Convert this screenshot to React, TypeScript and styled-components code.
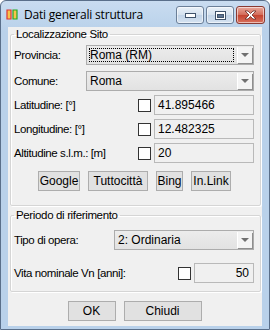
import React from "react";
import styled, { createGlobalStyle } from "styled-components";

const GlobalStyle = createGlobalStyle`
  html, body {
    margin: 0;
    padding: 0;
    background: #ffffff;
  }
  body {
    font-family: "Liberation Sans", Tahoma, Arial, sans-serif;
    font-size: 11px;
    color: #000;
  }
`;

const Window = styled.div`
  width: 270px;
  height: 330px;
  box-sizing: border-box;
  display: flex;
  flex-direction: column;
  border: 1px solid #5a6f8a;
  border-radius: 6px 6px 0 0;
  background: linear-gradient(#c9dcf0, #b9d1ea 30px, #b9d1ea);
  overflow: hidden;
`;

const TitleBar = styled.div`
  height: 26px;
  flex: none;
  display: flex;
  align-items: center;
  padding: 0 4px 0 5px;
  gap: 6px;
`;

const Title = styled.span`
  flex: 1;
  font-family: "Open Sans", "Liberation Sans", sans-serif;
  font-size: 12px;
  letter-spacing: -0.2px;
  color: #000;
`;

const CaptionButtons = styled.div`
  display: flex;
  gap: 2px;
  align-self: flex-start;
  margin-top: 5px;
`;

const CaptionButton = styled.div<{ close?: boolean }>`
  width: ${({ close }) => (close ? "29px" : "28px")};
  height: 18px;
  box-sizing: border-box;
  display: flex;
  align-items: center;
  justify-content: center;
  border: 1px solid ${({ close }) => (close ? "#8a3a32" : "#6b7f98")};
  border-radius: 3px;
  background: ${({ close }) =>
    close
      ? "linear-gradient(#e9a99c, #d26a57 50%, #c4432f 51%, #d8705d)"
      : "linear-gradient(#eaf1f8, #d4e1ef 50%, #c2d4e8 51%, #d6e3f1)"};
  box-shadow: inset 0 0 0 1px rgba(255, 255, 255, 0.55);
`;

const Client = styled.div`
  flex: 1;
  margin: 0 7px 3px 7px;
  background: #f0f0f0;
  display: flex;
  flex-direction: column;
  padding: 1px 1px 0 2px;
`;

const Group = styled.fieldset<{ pt: number; pb: number; mt?: number }>`
  margin: ${({ mt }) => mt ?? 0}px 0 0 0;
  padding: ${({ pt }) => pt}px 6px ${({ pb }) => pb}px 3px;
  border: 1px solid #d5d5d5;
  border-radius: 2px;
  box-shadow: inset 1px 1px 0 #fff, 1px 1px 0 #fff;
  display: flex;
  flex-direction: column;
`;

const Legend = styled.legend`
  padding: 0 2px;
  margin-left: 0;
  font-size: 11.5px;
  letter-spacing: -0.35px;
  line-height: 12px;
`;

const Row = styled.div<{ mt?: number }>`
  display: flex;
  align-items: center;
  height: 20px;
  margin-top: ${({ mt }) => mt ?? 0}px;
`;

const Label = styled.span`
  flex: 1;
  white-space: nowrap;
  font-size: 11.5px;
  letter-spacing: -0.4px;
`;

const Combo = styled.div<{ w: number }>`
  width: ${({ w }) => w}px;
  height: 20px;
  box-sizing: border-box;
  display: flex;
  border: 1px solid #acacac;
  background: linear-gradient(#ececec, #e2e2e2);
  font-size: 12px;
`;

const ComboText = styled.div<{ focused?: boolean }>`
  flex: 1;
  margin: 2px;
  padding-left: 1px;
  display: flex;
  align-items: center;
  outline: ${({ focused }) => (focused ? "1px dotted #000" : "none")};
  outline-offset: -1px;
`;

const ComboArrow = styled.div`
  width: 15px;
  margin: 1px;
  box-sizing: border-box;
  display: flex;
  align-items: center;
  justify-content: center;
  background: #f4f4f4;
  border-left: 1px solid #fff;
  box-shadow: 1px 1px 0 #8e8e8e;
  &::after {
    content: "";
    border-left: 4px solid transparent;
    border-right: 4px solid transparent;
    border-top: 4px solid #707070;
  }
`;

const Check = styled.span`
  width: 13px;
  height: 13px;
  box-sizing: border-box;
  border: 1px solid #333;
  background: #fff;
  margin-right: 3px;
`;

const Field = styled.div<{ w: number; right?: boolean }>`
  width: ${({ w }) => w}px;
  height: 20px;
  box-sizing: border-box;
  border: 1px solid #b9b9b9;
  background: #f0f0f0;
  display: flex;
  align-items: center;
  justify-content: ${({ right }) => (right ? "flex-end" : "flex-start")};
  padding: 0 4px 0 3px;
  font-size: 12px;
`;

const LinkRow = styled.div`
  display: flex;
  justify-content: flex-start;
  gap: 8px;
  margin-top: 8px;
  padding-left: 24px;
`;

const Button = styled.button<{ w: number }>`
  height: 20px;
  width: ${({ w }) => w}px;
  padding: 0;
  box-sizing: border-box;
  border: 1px solid #adadad;
  border-radius: 0;
  background: #e1e1e1;
  font-family: inherit;
  font-size: 12px;
  color: #000;
`;

const Footer = styled.div`
  display: flex;
  justify-content: center;
  gap: 8px;
  margin-top: 9px;
  padding-right: 2px;
`;

const AppIcon = () => (
  <svg width="12" height="11" viewBox="0 0 12 11">
    <path d="M1 1h4v9H1z" fill="#f7c34a" stroke="#d33" strokeWidth="1.2" />
    <path d="M7 1h4v9H7z" fill="#f7c34a" stroke="#2a2" strokeWidth="1.2" />
  </svg>
);

export default function App() {
  return (
    <>
      <GlobalStyle />
      <Window>
        <TitleBar>
          <AppIcon />
          <Title>Dati generali struttura</Title>
          <CaptionButtons>
            <CaptionButton>
              <svg width="11" height="5" viewBox="0 0 11 5">
                <rect x="0.5" y="0.5" width="10" height="4" fill="#fff" stroke="#40536b" />
              </svg>
            </CaptionButton>
            <CaptionButton>
              <svg width="11" height="9" viewBox="0 0 11 9">
                <rect x="0.5" y="0.5" width="10" height="8" fill="#fff" stroke="#40536b" />
                <rect x="2.5" y="3.5" width="6" height="3" fill="#5d7390" stroke="#40536b" />
              </svg>
            </CaptionButton>
            <CaptionButton close>
              <svg width="13" height="10" viewBox="0 0 13 10">
                <path
                  d="M1 1h3l2.5 2.5L9 1h3L8 5l4 4H9L6.5 6.5 4 9H1l4-4z"
                  fill="#fff"
                  stroke="#6b2b24"
                  strokeWidth="0.8"
                />
              </svg>
            </CaptionButton>
          </CaptionButtons>
        </TitleBar>
        <Client>
          <Group pt={5} pb={14}>
            <Legend>Localizzazione Sito</Legend>
            <Row>
              <Label>Provincia:</Label>
              <Combo w={168}>
                <ComboText focused>Roma (RM)</ComboText>
                <ComboArrow />
              </Combo>
            </Row>
            <Row mt={6}>
              <Label>Comune:</Label>
              <Combo w={168}>
                <ComboText>Roma</ComboText>
                <ComboArrow />
              </Combo>
            </Row>
            <Row mt={4}>
              <Label>Latitudine: [°]</Label>
              <Check />
              <Field w={100}>41.895466</Field>
            </Row>
            <Row mt={4}>
              <Label>Longitudine: [°]</Label>
              <Check />
              <Field w={100}>12.482325</Field>
            </Row>
            <Row mt={4}>
              <Label>Altitudine s.l.m.: [m]</Label>
              <Check />
              <Field w={100}>20</Field>
            </Row>
            <LinkRow>
              <Button w={42}>Google</Button>
              <Button w={60}>Tuttocittà</Button>
              <Button w={27}>Bing</Button>
              <Button w={40}>In.Link</Button>
            </LinkRow>
          </Group>
          <Group pt={9} pb={8} mt={3}>
            <Legend>Periodo di riferimento</Legend>
            <Row>
              <Label>Tipo di opera:</Label>
              <Combo w={140}>
                <ComboText>2: Ordinaria</ComboText>
                <ComboArrow />
              </Combo>
            </Row>
            <Row mt={13}>
              <Label>Vita nominale Vn [anni]:</Label>
              <Check />
              <Field w={60} right>
                50
              </Field>
            </Row>
          </Group>
          <Footer>
            <Button w={48}>OK</Button>
            <Button w={78}>Chiudi</Button>
          </Footer>
        </Client>
      </Window>
    </>
  );
}
